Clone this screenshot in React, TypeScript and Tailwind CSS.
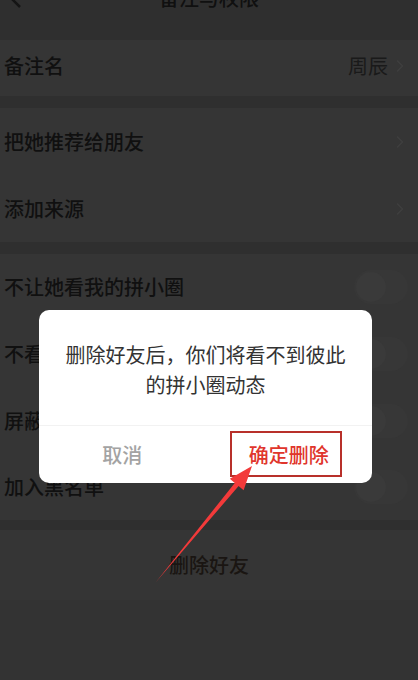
import { ChevronRight } from "lucide-react";

const font = { fontFamily: '"Noto Sans CJK SC", "Noto Sans", sans-serif' };

// the whole settings page sits under a dark mask, so colours are the dimmed ones
const Row = ({ label, h, right }: { label: string; h: string; right?: React.ReactNode }) => (
  <div className={`flex items-center justify-between bg-[#353535] pl-[4px] pr-[8px] ${h}`}>
    <span className="text-[20px] font-medium leading-[28px] text-[#101010]">{label}</span>
    {right}
  </div>
);

const Toggle = () => (
  <div className="mr-[2px] h-[34px] w-[54px] rounded-full bg-[#373737] p-[2px]">
    <div className="h-[30px] w-[30px] rounded-full bg-[#3a3a3a]" />
  </div>
);

const Chevron = () => <ChevronRight className="h-5 w-5 text-[#3e3e3e]" strokeWidth={2} />;

export default function App() {
  return (
    <div className="relative h-[680px] w-[418px] overflow-hidden bg-[#2f2f2f]" style={font}>
      <div className="flex h-[40px] items-start justify-center bg-[#2f2f2f]">
        <svg className="absolute left-[8px] top-[-10px]" width="16" height="18" viewBox="0 0 16 18">
          <path d="M12 1 L4 9 L12 17" fill="none" stroke="#151515" strokeWidth="2.5" />
        </svg>
        <span className="-mt-[13px] text-[20px] font-medium leading-[22px] text-[#101010]">备注与权限</span>
      </div>
      <Row
        label="备注名"
        h="h-[56px] pb-[4px]"
        right={
          <div className="flex items-center gap-[2px]">
            <span className="text-[20px] text-[#1a1a1a]">周辰</span>
            <Chevron />
          </div>
        }
      />
      <div className="h-[12px]" />
      <Row label="把她推荐给朋友" h="h-[68px]" right={<Chevron />} />
      <Row label="添加来源" h="h-[66px]" right={<Chevron />} />
      <div className="h-[12px]" />
      <Row label="不让她看我的拼小圈" h="h-[66px]" right={<Toggle />} />
      <Row label="不看她的拼小圈" h="h-[68px]" right={<Toggle />} />
      <Row label="屏蔽她的拼单动态" h="h-[66px]" right={<Toggle />} />
      <Row label="加入黑名单" h="h-[66px]" right={<Toggle />} />
      <div className="h-[10px]" />
      <div className="flex h-[70px] items-center justify-center bg-[#353535]">
        <span className="text-[20px] font-medium text-[#1a1512]">删除好友</span>
      </div>
      <div className="h-[110px] bg-[#333333]" />

      {/* dialog */}
      <div className="absolute left-[39px] top-[310px] flex w-[333px] flex-col rounded-[10px] bg-white">
        <div className="px-[20px] pb-[25px] pt-[30px] text-center text-[20px] leading-[30px] text-[#333]">
          删除好友后，你们将看不到彼此
          <br />
          的拼小圈动态
        </div>
        <div className="relative flex h-[58px] border-t border-[#f2f2f2]">
          <button className="flex-1 text-[20px] font-medium text-[#a3a3a3]">取消</button>
          <button className="flex-1 text-[20px] font-medium text-[#e0352c]">确定删除</button>
          <div className="absolute left-[191px] top-[5px] h-[46px] w-[112px] border-2 border-[#b8302a]" />
        </div>
      </div>

      {/* annotation arrow */}
      <svg className="absolute inset-0" width="418" height="680" viewBox="0 0 418 680">
        <polygon
          points="156,582 234.8,482.9 229.8,478.8 252,466 243.6,490.2 238.6,486.1"
          fill="#f33a3a"
        />
      </svg>
    </div>
  );
}
